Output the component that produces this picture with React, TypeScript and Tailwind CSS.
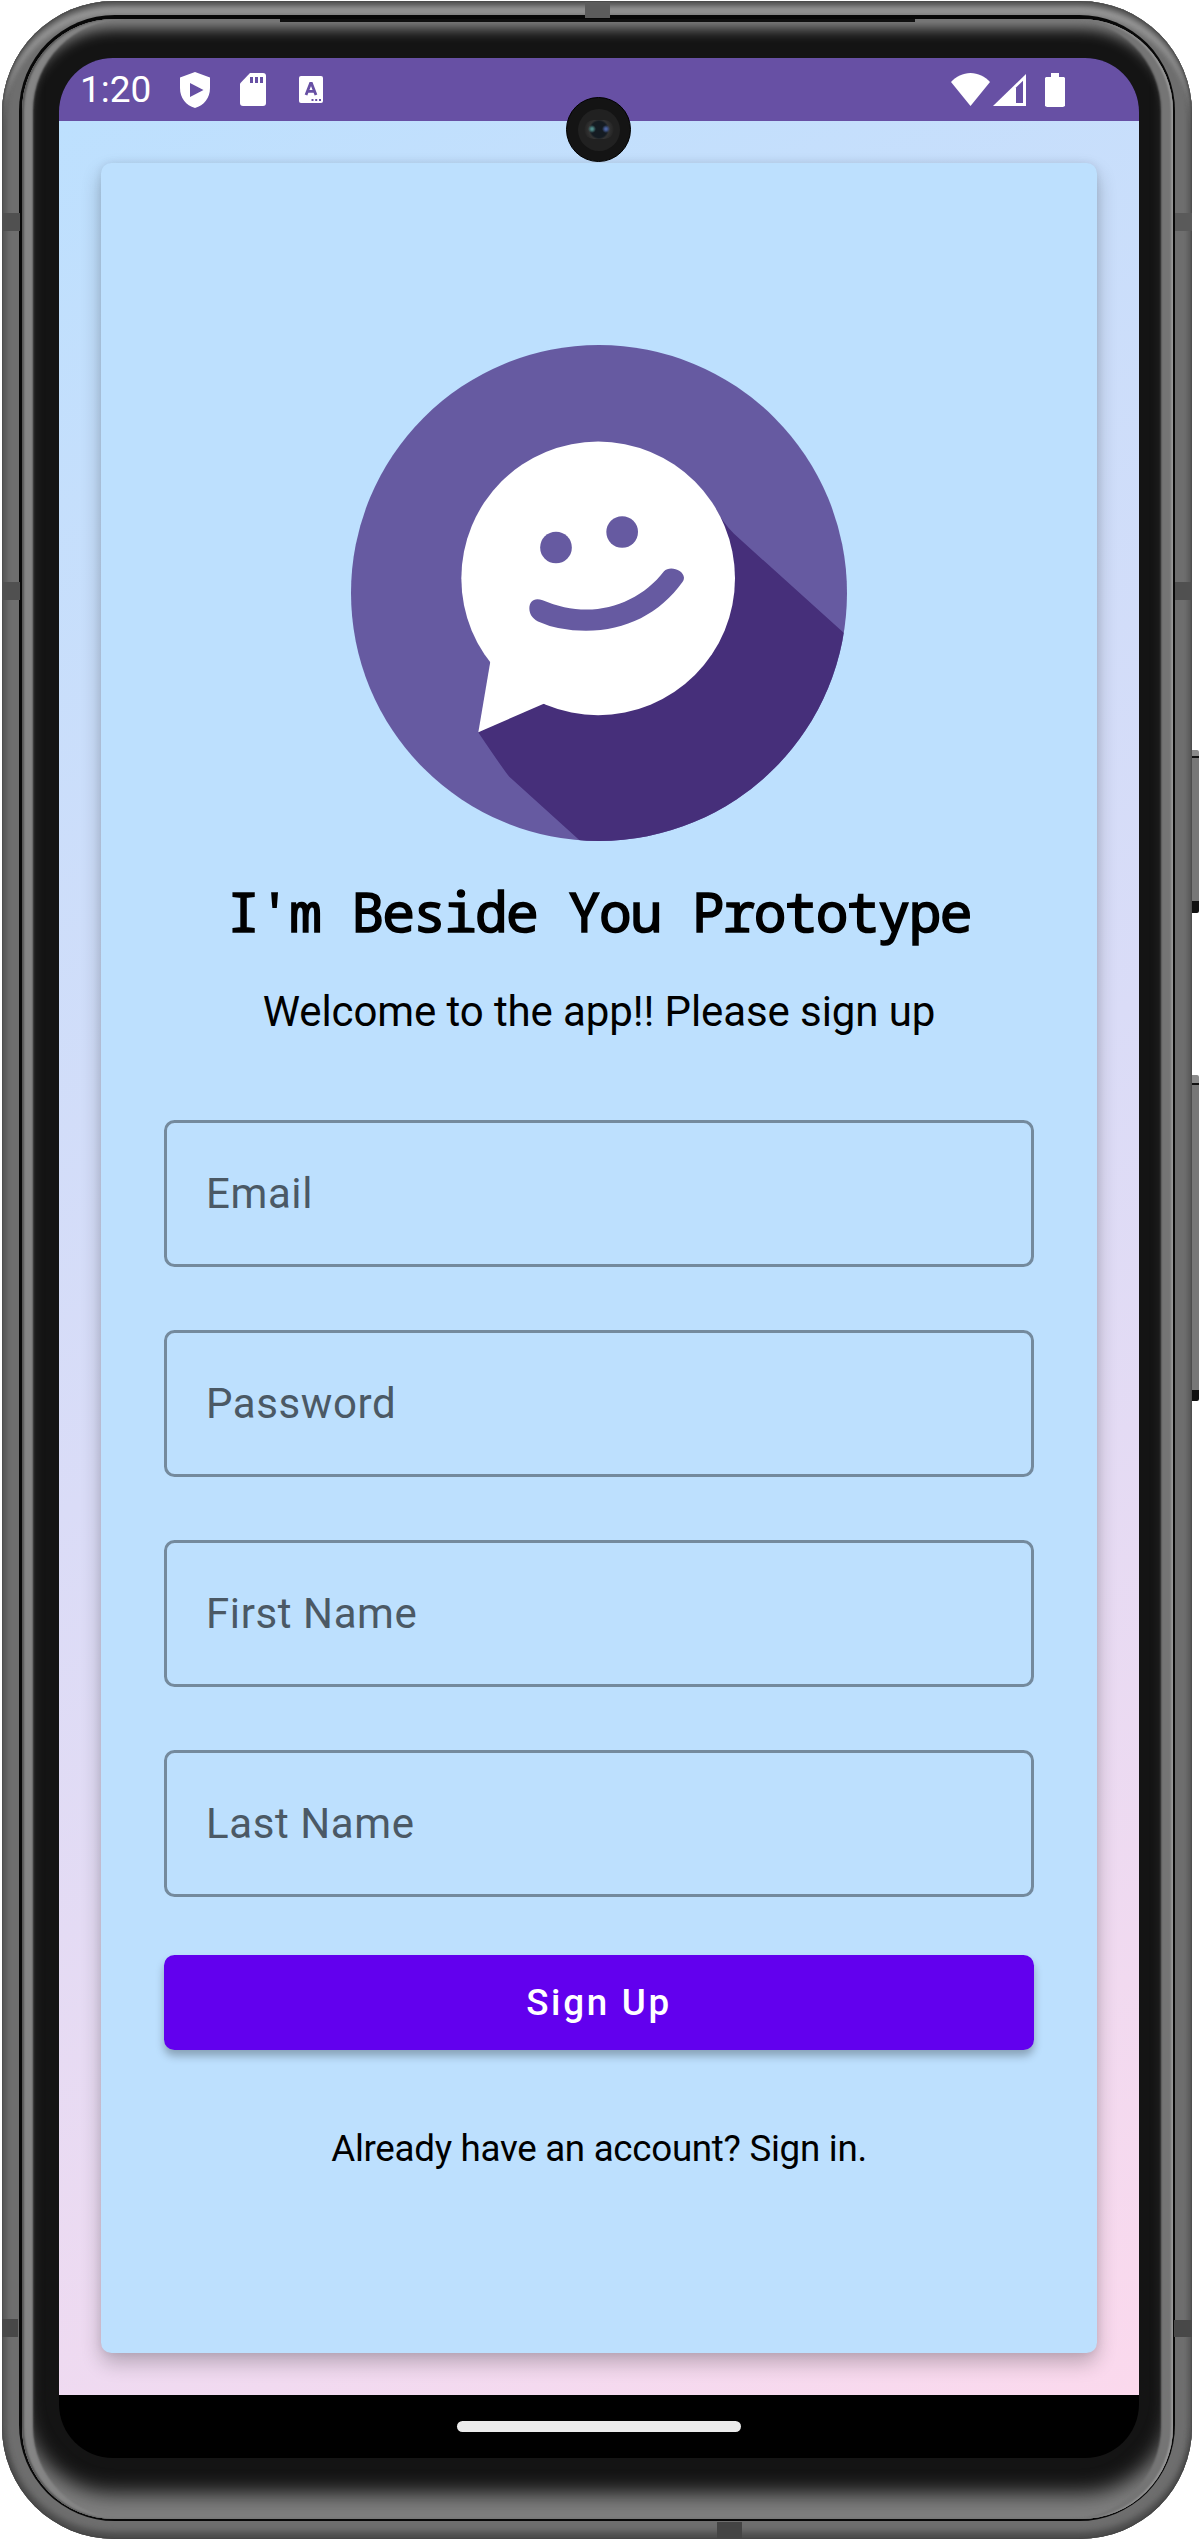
import React from "react";

function Logo() {
  return (
    <svg viewBox="33 44.5 1488 1488" className="mt-[182px] h-[496px] w-[496px] shrink-0">
      <defs>
        <clipPath id="disc">
          <circle cx="777" cy="788.5" r="744" />
        </clipPath>
      </defs>
      <circle cx="777" cy="788.5" r="744" fill="#665aa1" />
      <path
        clipPath="url(#disc)"
        d="M1128 536 Q1150 580 1182 611 L1600 988 V1640 H840 L508 1340 Q490 1318 415 1207 L611 1100 Z"
        fill="#462f7a"
      />
      <circle cx="774.5" cy="744.5" r="410.5" fill="#fff" />
      <path d="M451 994 L415 1206 L613 1120 L700 900 Z" fill="#fff" />
      <circle cx="648" cy="652" r="47.5" fill="#665aa1" />
      <circle cx="846.5" cy="605.5" r="47.5" fill="#665aa1" />
      <path
        d="M608 810 C650 828 695 838 740 838 C830 838 918 794 972 723 C988 706 1030 717 1032 743 Q1032 749 1028 755 C960 850 858 902 738 902 Q655 902 594 874 C576 864 568 850 568 834 C569 813 582 801 608 810 Z"
        fill="#665aa1"
      />
    </svg>
  );
}

function ShieldIcon() {
  return (
    <svg viewBox="0 0 30 36" className="ml-[29px] h-9 w-[30px]" fill="#fff">
      <path
        fillRule="evenodd"
        d="M15 0 L30 5.5 V16 C30 26 24 33.5 15 36 C6 33.5 0 26 0 16 V5.5 Z M10 11 V25 L23.5 18 Z"
      />
    </svg>
  );
}

function SdCardIcon() {
  return (
    <svg viewBox="0 0 26 33" className="ml-[30px] h-[33px] w-[26px]">
      <path d="M10 0 H23 Q26 0 26 3 V30 Q26 33 23 33 H3 Q0 33 0 30 V10.5 Z" fill="#fff" />
      <path d="M10 4 H13 V10 H10 Z M15 4 H18 V10 H15 Z M20 4 H23 V10 H20 Z" fill="#6750a4" />
    </svg>
  );
}

function KeyboardIcon() {
  return (
    <svg viewBox="0 0 24 27" className="ml-[33px] h-[27px] w-6">
      <rect width="24" height="27" rx="2" fill="#fff" />
      <path d="M7 19 L11.5 7.5 H12.5 L17 19 M8.5 15.3 H15.5" fill="none" stroke="#6750a4" strokeWidth="2.8" />
      <path d="M12.5 23 H14.5 V25 H12.5 Z M16.2 23 H18.2 V25 H16.2 Z M20 23 H22 V25 H20 Z" fill="#6750a4" />
    </svg>
  );
}

function StatusBar() {
  return (
    <div className="flex h-[63px] shrink-0 items-center bg-[#6750a4] pl-[21px] pr-[74px]">
      <div className="w-[71px] whitespace-nowrap text-[37px] leading-[44px] text-white">1:20</div>
      <ShieldIcon />
      <SdCardIcon />
      <KeyboardIcon />
      <div className="flex-1" />
      <svg viewBox="0 0 39 33" className="h-[33px] w-[39px]" fill="#fff">
        <path d="M19.5 33 L0 9 C5 3.5 12 0 19.5 0 C27 0 34 3.5 39 9 Z" />
      </svg>
      <svg viewBox="0 0 33 32" className="ml-[3px] h-8 w-[33px]">
        <path d="M33 0 V32 H0 Z" fill="#fff" />
        <path d="M23 13.5 L30 6.7 V29 H23 Z" fill="#6750a4" />
      </svg>
      <svg viewBox="0 0 20 34" className="ml-[19px] h-[34px] w-5" fill="#fff">
        <path d="M6 0 H14 V4 H19 L20 5 V33 L18 34 H2 L0 33 V5 L1 4 H6 Z" />
      </svg>
    </div>
  );
}

function Field({ label }: { label: string }) {
  return (
    <div className="flex h-[147px] items-center rounded-[10.5px] border-[3px] border-[#748a9d] pl-[39px] text-[42px] leading-[50px] tracking-[0.6px] text-[#4b5965]">
      {label}
    </div>
  );
}

function SignUpCard() {
  return (
    <div className="flex flex-1 flex-col items-center rounded-[10.5px] bg-[#bde0fe] px-[63px] text-black shadow-[0_10px_20px_rgba(0,0,0,0.24),0_0_8px_rgba(0,0,0,0.08)]">
      <Logo />
      <h1 className="mt-[38px] whitespace-pre font-['Droid_Sans_Mono','Noto_Sans_Mono','DejaVu_Sans_Mono',monospace] text-[54.5px] leading-[64px] tracking-[-1.73px] [-webkit-text-stroke:1.6px_black]">
        I'm Beside You Prototype
      </h1>
      <p className="mt-11 whitespace-nowrap text-[42px] leading-[50px] tracking-[-0.1px]">
        Welcome to the app!! Please sign up
      </p>
      <div className="mt-[83px] flex w-full flex-col gap-[63px]">
        <Field label="Email" />
        <Field label="Password" />
        <Field label="First Name" />
        <Field label="Last Name" />
      </div>
      <button className="mt-[58px] h-[95px] w-full rounded-[10.5px] bg-[#6200ee] text-[36.75px] font-medium leading-[44px] tracking-[2.7px] text-white shadow-[0_6px_8px_rgba(0,0,0,0.28)]">
        Sign Up
      </button>
      <p className="mt-[77px] whitespace-nowrap text-[36.75px] leading-[44px] tracking-[-0.3px]">
        Already have an account? Sign in.
      </p>
    </div>
  );
}

function Screen() {
  return (
    <div className="flex h-[2400px] w-[1080px] flex-col overflow-hidden rounded-[54px] bg-black">
      <StatusBar />
      <div className="flex h-[2274px] flex-col bg-[linear-gradient(154.6deg,#bde0fe_0%,#dadcf7_50%,#fbd9ed_100%)] p-[42px]">
        <SignUpCard />
      </div>
      <div className="flex h-[63px] items-center justify-center">
        <div className="h-[11px] w-[284px] rounded-full bg-[#ebebeb]" />
      </div>
    </div>
  );
}

export default function App() {
  return (
    <div className="relative h-[2541px] w-[1200px] overflow-hidden bg-white pl-[2px] pt-px font-[Roboto,sans-serif]">
      <div className="h-[2538px] w-[1190px] rounded-[112px] bg-[#6e6e6e] pl-[17px] pt-[14px] shadow-[inset_0_0_2px_#333,inset_0_-7px_6px_#4c4c4c,inset_0_5px_5px_#555,inset_0_14px_5px_#959595,inset_4px_0_5px_#555,inset_-3px_0_4px_#555]">
        <div className="h-[2506px] w-[1156px] rounded-[96px] bg-[#080808] pl-[3px] pt-1">
          <div className="h-[2500px] w-[1151px] rounded-[92px] bg-[#141414] pl-[37px] pt-[39px] shadow-[inset_2px_0_2px_#555,inset_-2px_0_2px_#999,inset_11px_0_2px_#858585,inset_-12px_0_2px_#757575,inset_0_10px_14px_#858585,inset_0_-26px_20px_#7e7e7e]">
            <Screen />
          </div>
        </div>
      </div>
      <div className="absolute left-[280px] top-[19px] h-[3px] w-[635px] bg-[#101010]" />
      <div className="absolute left-[585px] top-0.5 h-4 w-[25px] bg-[#5c5c5c]" />
      <div className="absolute left-[717px] top-[2522px] h-4 w-[25px] bg-[#444]" />
      <div className="absolute left-[2px] top-[213px] h-[18px] w-[18px] bg-[#505050]" />
      <div className="absolute left-[2px] top-[582px] h-[18px] w-[18px] bg-[#505050]" />
      <div className="absolute left-[2px] top-[2319px] h-[18px] w-4 bg-[#484848]" />
      <div className="absolute left-[1175px] top-[213px] h-[18px] w-[17px] bg-[#5a5a5a]" />
      <div className="absolute left-[1175px] top-[582px] h-[18px] w-[17px] bg-[#505050]" />
      <div className="absolute left-[1174px] top-[2320px] h-[17px] w-[18px] bg-[#484848]" />
      <div className="absolute left-[1192px] top-[750px] h-[163px] w-[7px] rounded-r-[2px] border-b-[12px] border-[#111] bg-[linear-gradient(#8a8a8a_0_6px,#111_6px_8px,#777_8px)]" />
      <div className="absolute left-[1192px] top-[1075px] h-[326px] w-[7px] rounded-r-[2px] border-b-[11px] border-[#111] bg-[linear-gradient(#8a8a8a_0_8px,#111_8px_10px,#777_10px)]" />
      <div className="absolute left-[566px] top-[97px] flex h-[65px] w-[65px] items-center justify-center rounded-full border border-black bg-[#141414]">
        <div className="flex h-[42px] w-[42px] items-center justify-center rounded-full bg-[#212121]">
          <div className="h-[19px] w-[30px] rounded-full bg-[radial-gradient(circle_at_8px_9px,#4f8a89_0_1px,transparent_4px),radial-gradient(circle_at_22px_9px,#4a62a0_0_1px,transparent_4px),radial-gradient(circle,#141b22_0_8px,#333_10px,#222_15px)]" />
        </div>
      </div>
    </div>
  );
}
